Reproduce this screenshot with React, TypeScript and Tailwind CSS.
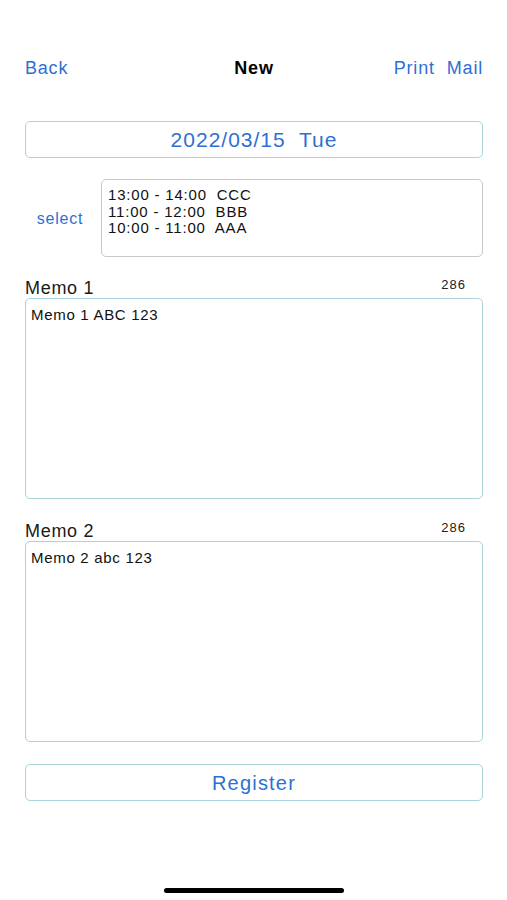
import React from "react";

const FONT = { fontFamily: '"Liberation Sans", Arial, sans-serif' };

function Memo({ label, text }: { label: string; text: string }) {
  return (
    <div className="flex flex-col">
      <div className="flex justify-between items-start h-[20px]">
        <span className="text-[18px] leading-[20px] tracking-[0.7px] text-[#1a1a1a]">{label}</span>
        <span className="text-[13px] leading-[15px] tracking-[1px] font-medium text-[#222] mr-[17px] -mt-[1px]">286</span>
      </div>
      <textarea
        readOnly
        defaultValue={text}
        style={FONT}
        className="h-[201px] w-full resize-none rounded-[5px] border border-[#a9d3de] bg-white pl-[5px] pt-[7px] text-[15px] leading-[18px] tracking-[0.7px] text-[#111] outline-none"
      />
    </div>
  );
}

export default function App() {
  return (
    <div style={FONT} className="min-h-[900px] w-full bg-white flex flex-col pl-[25px] pr-[24px]">
      {/* header */}
      <div className="pt-[57px] flex items-center justify-between h-[79px] text-[18px] leading-[22px] tracking-[0.8px]">
        <button className="text-[#2f6fd3] w-[92px] text-left">Back</button>
        <span className="font-bold text-black">New</span>
        <div className="flex gap-[12px] w-[92px] justify-end text-[#2f6fd3]">
          <button>Print</button>
          <button>Mail</button>
        </div>
      </div>

      {/* date */}
      <button className="mt-[42px] h-[37px] w-full rounded-[5px] border border-[#a9d3de] text-[21px] tracking-[1px] text-[#2f6fd3] whitespace-pre">
        {"2022/03/15  Tue"}
      </button>

      {/* select */}
      <div className="mt-[21px] flex items-center">
        <button className="w-[70px] text-center text-[16px] tracking-[0.8px] text-[#2f6fd3] pt-[1px]">select</button>
        <div className="ml-[6px] flex-1 h-[78px] rounded-[5px] border border-[#c8c8c8] pl-[6px] pt-[7px] text-[15px] leading-[16.5px] tracking-[0.8px] text-[#111] whitespace-pre">
          <div>{"13:00 - 14:00  CCC"}</div>
          <div>{"11:00 - 12:00  BBB"}</div>
          <div>{"10:00 - 11:00  AAA"}</div>
        </div>
      </div>

      <div className="mt-[21px]">
        <Memo label="Memo 1" text="Memo 1 ABC 123" />
      </div>
      <div className="mt-[22px]">
        <Memo label="Memo 2" text="Memo 2 abc 123" />
      </div>

      <button className="mt-[22px] h-[37px] w-full rounded-[5px] border border-[#a9d3de] text-[20px] tracking-[1.2px] text-[#2f6fd3]">
        Register
      </button>

      <div className="mt-[87px] flex justify-center pr-[1px]">
        <div className="h-[5px] w-[180px] rounded-full bg-black" />
      </div>
    </div>
  );
}
